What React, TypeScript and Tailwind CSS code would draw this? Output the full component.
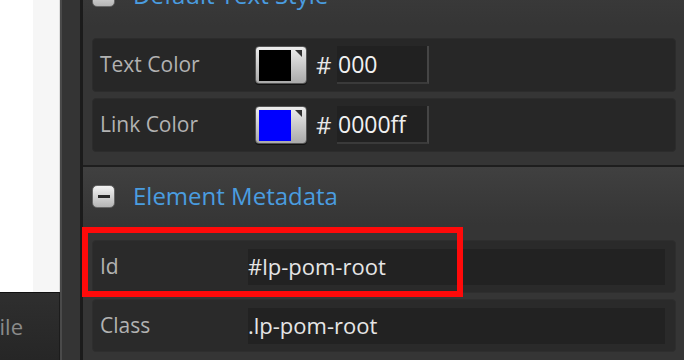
import React from 'react'

function Swatch({ color }: { color: string }) {
  return (
    <div className="relative w-[52px] h-[38px] rounded-[4px] bg-gradient-to-b from-[#eeeeee] to-[#a9a9a9] border border-[#555] shadow-[0_1px_0_#111] flex items-center pl-[3px]">
      <div className={`w-[32px] h-[31px] ${color}`} />
      <div className="absolute top-[3px] right-[4px] w-0 h-0 border-t-[7px] border-t-[#333] border-l-[7px] border-l-transparent" />
    </div>
  )
}

function ColorRow({ label, swatch, value }: { label: string; swatch: string; value: string }) {
  return (
    <div className="h-[54px] rounded-[4px] bg-[#272727] border border-[#2c2c2c] flex items-center pl-[7px]">
      <div className="w-[155px] text-[21px] text-[#b2b2b2]">{label}</div>
      <Swatch color={swatch} />
      <div className="ml-[9px] w-[21px] text-[24px] text-[#e8e8e8]">#</div>
      <div className="h-[38px] w-[92px] bg-[#212121] border-r-2 border-b-2 border-r-[#454545] border-b-[#3a3a3a] flex items-center pl-[1px] text-[23px] text-[#f0f0f0]">
        {value}
      </div>
    </div>
  )
}

function MetaRow({ label, value }: { label: string; value: string }) {
  return (
    <div className="h-[53px] rounded-[4px] bg-[#2a2a2a] border border-[#2e2e2e] flex items-center pl-[7px] pr-[10px]">
      <div className="w-[148px] text-[21px] text-[#b2b2b2]">{label}</div>
      <div className="flex-1 h-[36px] bg-[#222222] flex items-center text-[22px] text-[#e6e6e6]">{value}</div>
    </div>
  )
}

function SectionHeader({ title }: { title: string }) {
  return (
    <div className="flex items-center gap-[18px] pl-[9px]">
      <div className="w-[23px] h-[23px] rounded-[5px] bg-gradient-to-b from-[#f4f4f4] to-[#b5b5b5] border border-[#666] flex items-center justify-center">
        <div className="w-[12px] h-[3px] bg-[#2a2a2a]" />
      </div>
      <div className="text-[24px] text-[#4a9de0]">{title}</div>
    </div>
  )
}

export default function App() {
  return (
    <div
      className="relative w-[684px] h-[360px] overflow-hidden flex bg-[#333333]"
      style={{ fontFamily: '"Open Sans", "DejaVu Sans", sans-serif' }}
    >
      {/* left canvas strip */}
      <div className="w-[60px] flex flex-col shrink-0">
        <div className="h-[292px] flex">
          <div className="w-[33px] bg-white" />
          <div className="w-[27px] bg-[#f6f6f6] border-r border-[#dcdcdc]" />
        </div>
        <div className="flex-1 bg-gradient-to-b from-[#2f2f2f] to-[#262626] border-t border-[#111] border-r border-r-[#1c1c1c] overflow-hidden">
          <div className="w-[23px] flex justify-end pt-[17px]">
            <span className="shrink-0 whitespace-nowrap text-[22px] text-[#8a8a8a]">Mobile</span>
          </div>
        </div>
      </div>

      {/* gutter */}
      <div className="w-[20px] shrink-0 bg-[#343434] border-l-2 border-[#4a4a4a]" />
      <div className="w-[3px] shrink-0 bg-[#1b1b1b]" />

      {/* properties panel */}
      <div className="flex-1 flex flex-col bg-[#353535]">
        <section className="-mt-[36px] border-b-2 border-[#1e1e1e] pb-[13px]">
          <div className="h-[62px] flex items-center bg-gradient-to-b from-[#3e3e3e] to-[#353535]">
            <SectionHeader title="Default Text Style" />
          </div>
          <div className="flex flex-col gap-[6px] pt-[12px] pl-[9px] pr-[8px]">
            <ColorRow label="Text Color" swatch="bg-black" value="000" />
            <ColorRow label="Link Color" swatch="bg-[#0000ff]" value="0000ff" />
          </div>
        </section>

        <section>
          <div className="h-[58px] flex items-center bg-gradient-to-b from-[#404040] to-[#353535]">
            <SectionHeader title="Element Metadata" />
          </div>
          <div className="flex flex-col gap-[6px] pt-[15px] pl-[9px] pr-[8px]">
            <MetaRow label="Id" value="#lp-pom-root" />
            <MetaRow label="Class" value=".lp-pom-root" />
          </div>
        </section>
      </div>

      {/* highlight annotation */}
      <div className="absolute left-[82px] top-[227px] w-[381px] h-[70px] border-[6px] border-[#ff0a0a]" />
    </div>
  )
}
